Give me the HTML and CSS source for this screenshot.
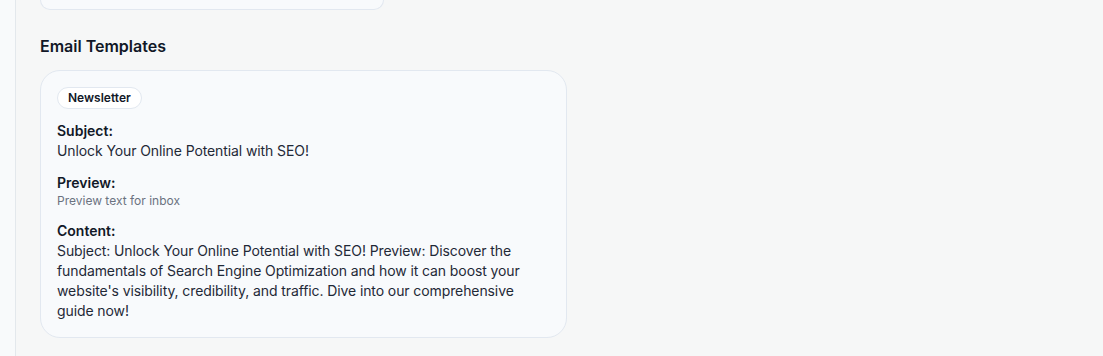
FILE: index.html
```html
<!DOCTYPE html>
<html lang="en">
<head>
  <meta charset="UTF-8" />
  <title>Email Templates</title>
  <link rel="stylesheet" href="styles.css">
</head>
<body>

  <div class="layout">
    <!-- Sidebar edge -->
    <aside class="sidebar"></aside>

    <main class="main">
      <!-- Previous card (scrolled past) -->
      <div class="card card-prev"></div>

      <!-- Email Templates -->
      <section class="templates">
        <h2>Email Templates</h2>

        <div class="card template">
          <span class="badge">Newsletter</span>

          <div class="field">
            <h4>Subject:</h4>
            <p>Unlock Your Online Potential with SEO!</p>
          </div>

          <div class="field">
            <h4>Preview:</h4>
            <p class="muted">Preview text for inbox</p>
          </div>

          <div class="field">
            <h4>Content:</h4>
            <p>Subject: Unlock Your Online Potential with SEO! Preview: Discover the fundamentals of Search Engine Optimization and how it can boost your website's visibility, credibility, and traffic. Dive into our comprehensive guide now!</p>
          </div>
        </div>
      </section>
    </main>
  </div>

</body>
</html>
```

FILE: styles.css
```css
body {
  font-family: Inter, "Liberation Sans", sans-serif;
  margin: 0;
  padding: 0;
  background: #f6f7f7;
  color: #111827;
}

.layout {
  display: flex;
  min-height: 356px;
}

.sidebar {
  width: 15px;
  background: #f8fafb;
  border-right: 1px solid #e3e8ec;
}

.main {
  flex: 1;
  padding-left: 24px;
}

.card {
  background: #f8fafc;
  border: 1px solid #e2e8f0;
  border-radius: 20px;
}

.card-prev {
  width: 342px;
  height: 9px;
  border-top: none;
  border-radius: 0 0 20px 20px;
}

.templates h2 {
  font-size: 16px;
  font-weight: 600;
  line-height: 24px;
  margin: 24px 0 12px;
}

.template {
  width: 493px;
  padding: 16px;
  display: flex;
  flex-direction: column;
  align-items: flex-start;
  gap: 12px;
}

.badge {
  display: inline-block;
  font-size: 12px;
  font-weight: 600;
  line-height: 20px;
  padding: 0 10px;
  background: #ffffff;
  border: 1px solid #e2e8f0;
  border-radius: 999px;
}

.field h4 {
  font-size: 14px;
  font-weight: 600;
  line-height: 20px;
  margin: 0;
}

.field p {
  font-size: 14px;
  line-height: 20px;
  letter-spacing: -0.1px;
  margin: 0;
  color: #1f2937;
}

.field p.muted {
  font-size: 12px;
  line-height: 16px;
  letter-spacing: 0;
  color: #6b7280;
}
```
